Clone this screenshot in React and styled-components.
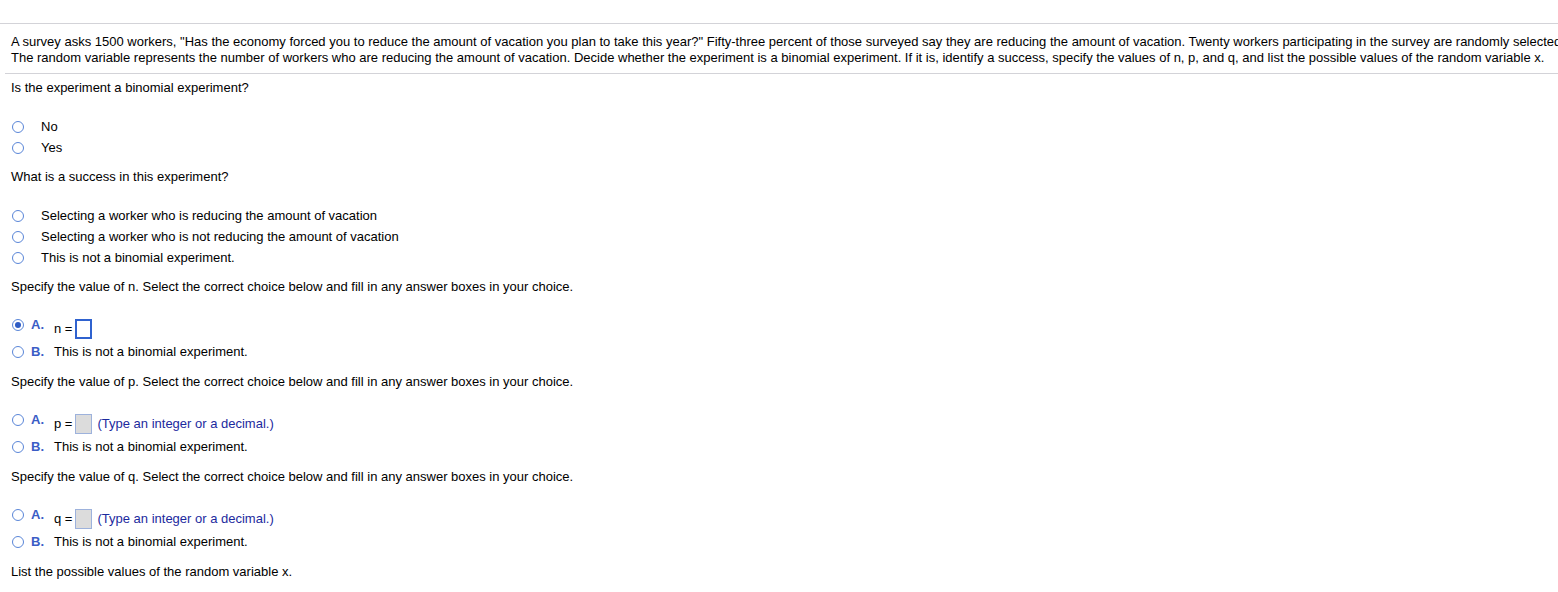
import React from "react";
import styled, { createGlobalStyle } from "styled-components";

const GlobalStyle = createGlobalStyle`
  body {
    margin: 0;
    background: #fff;
    overflow: hidden;
    font-family: "Liberation Sans", Arial, sans-serif;
    font-size: 13px;
    color: #000;
  }
`;

const Page = styled.div`
  padding-top: 23px;
`;

const Header = styled.div`
  border-top: 1px solid #d3d3d8;
`;

const Intro = styled.p`
  margin: 0 0 0 5px;
  padding: 10px 0 7px 6px;
  line-height: 16px;
  white-space: nowrap;
  overflow: hidden;
  border-bottom: 1px solid #d3d3d8;
`;

const Question = styled.div`
  margin-top: ${(p) => p.$gap}px;
  padding-left: 11px;
  line-height: 16px;
`;

const OptionList = styled.div`
  margin-top: 20px;
`;

const OptionRow = styled.div`
  display: flex;
  align-items: center;
  height: 21px;
  padding-left: 12px;
`;

const Radio = styled.span`
  position: relative;
  display: inline-block;
  flex: none;
  width: 12px;
  height: 12px;
  box-sizing: border-box;
  border: 1.5px solid #5a86d8;
  border-radius: 50%;
  background: #fff;

  &::after {
    content: "";
    display: ${(p) => (p.$checked ? "block" : "none")};
    position: absolute;
    left: 50%;
    top: 50%;
    width: 6px;
    height: 6px;
    margin: -3px 0 0 -3px;
    border-radius: 50%;
    background: #2f5cc4;
  }
`;

const OptionLabel = styled.span`
  margin-left: 17px;
`;

const ChoiceList = styled.div`
  margin-top: 22px;
  display: flex;
  flex-direction: column;
  gap: 5px;
`;

const ChoiceRow = styled.div`
  display: flex;
  align-items: flex-start;
  padding-left: 12px;
`;

const Marker = styled.div`
  display: flex;
  align-items: center;
  height: 16px;
`;

const Letter = styled.span`
  margin-left: 7px;
  width: 23px;
  font-weight: bold;
  color: #3b5dc6;
  line-height: 16px;
`;

const Content = styled.div`
  display: flex;
  align-items: center;
  line-height: 16px;
  ${(p) => p.$boxed && "margin-top: 2px; height: 20px;"}
`;

const AnswerBox = styled.span`
  display: inline-block;
  width: 17px;
  height: 20px;
  box-sizing: border-box;
  margin-left: 3px;
  border: ${(p) => (p.$active ? "2px solid #2f62cf" : "1px solid #9db2dc")};
  background: ${(p) => (p.$active ? "#fff" : "#dcdcdc")};
`;

const Hint = styled.span`
  margin-left: 5px;
  color: #1c2a9e;
`;

const Options = ({ items }) => (
  <OptionList>
    {items.map((t) => (
      <OptionRow key={t}>
        <Radio />
        <OptionLabel>{t}</OptionLabel>
      </OptionRow>
    ))}
  </OptionList>
);

const ValueChoice = ({ name, active, hint, checked }) => (
  <ChoiceList>
    <ChoiceRow>
      <Marker>
        <Radio $checked={checked} />
        <Letter>A.</Letter>
      </Marker>
      <Content $boxed>
        {name}&nbsp;=
        <AnswerBox $active={active} />
        {hint && <Hint>(Type an integer or a decimal.)</Hint>}
      </Content>
    </ChoiceRow>
    <ChoiceRow>
      <Marker>
        <Radio />
        <Letter>B.</Letter>
      </Marker>
      <Content>This is not a binomial experiment.</Content>
    </ChoiceRow>
  </ChoiceList>
);

const App = () => (
  <Page>
    <GlobalStyle />
    <Header>
      <Intro>
        A survey asks 1500 workers, "Has the economy forced you to reduce the amount of vacation you plan to take this year?" Fifty-three percent of those surveyed say they are reducing the amount of vacation. Twenty workers participating in the survey are randomly selected.
        <br />
        The random variable represents the number of workers who are reducing the amount of vacation. Decide whether the experiment is a binomial experiment. If it is, identify a success, specify the values of n, p, and q, and list the possible values of the random variable x.
      </Intro>
    </Header>

    <Question $gap={6}>Is the experiment a binomial experiment?</Question>
    <Options items={["No", "Yes"]} />

    <Question $gap={11}>What is a success in this experiment?</Question>
    <Options
      items={[
        "Selecting a worker who is reducing the amount of vacation",
        "Selecting a worker who is not reducing the amount of vacation",
        "This is not a binomial experiment.",
      ]}
    />

    <Question $gap={11}>
      Specify the value of n. Select the correct choice below and fill in any answer boxes in your choice.
    </Question>
    <ValueChoice name="n" active checked />

    <Question $gap={14}>
      Specify the value of p. Select the correct choice below and fill in any answer boxes in your choice.
    </Question>
    <ValueChoice name="p" hint />

    <Question $gap={14}>
      Specify the value of q. Select the correct choice below and fill in any answer boxes in your choice.
    </Question>
    <ValueChoice name="q" hint />

    <Question $gap={14}>List the possible values of the random variable x.</Question>
  </Page>
);

export default App;
